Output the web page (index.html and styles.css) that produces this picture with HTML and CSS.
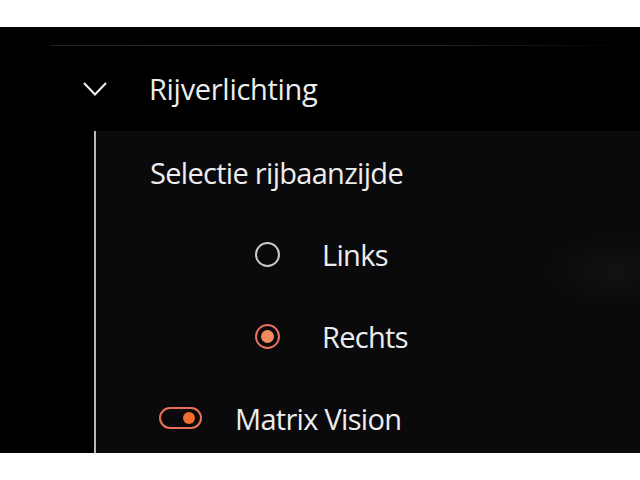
FILE: index.html
```html
<!DOCTYPE html>
<html>
<head>
<meta charset="utf-8">
<link rel="stylesheet" href="styles.css">
</head>
<body>
<div class="screen">
  <div class="divider"></div>
  <div class="header">
    <svg class="chevron" width="24" height="14" viewBox="0 0 24 14"><path d="M1 1 L12 12.5 L23 1" fill="none" stroke="#f2f2f2" stroke-width="2"/></svg>
    <span class="title">Rijverlichting</span>
  </div>
  <div class="panel">
    <div class="row section">Selectie rijbaanzijde</div>
    <div class="row option">
      <span class="radio"></span>
      <span class="label">Links</span>
    </div>
    <div class="row option">
      <span class="radio checked"></span>
      <span class="label">Rechts</span>
    </div>
    <div class="row toggle-row">
      <span class="toggle"><span class="knob"></span></span>
      <span class="label">Matrix Vision</span>
    </div>
  </div>
</div>
</body>
</html>
```
FILE: styles.css
```css
html, body {
  margin: 0;
  padding: 0;
  background: #ffffff;
}
.screen {
  margin-top: 27px;
  height: 426px;
  background: #000;
  overflow: hidden;
  display: flex;
  flex-direction: column;
  font-family: "Open Sans", sans-serif;
  color: #ededed;
}
.divider {
  margin-top: 18px;
  margin-left: 50px;
  width: 560px;
  height: 1px;
  background: linear-gradient(to right, #222, #2c2c2c 40%, #1e1e1e 75%, #050505);
  flex: none;
}
.header {
  flex: none;
  height: 85px;
  display: flex;
  align-items: center;
}
.chevron {
  margin-left: 83px;
}
.title {
  margin-left: 42px;
  font-size: 29px;
  letter-spacing: -0.3px;
}
.panel {
  flex: 1;
  margin-left: 94px;
  border-left: 2px solid #b9b9bd;
  background: radial-gradient(ellipse 70px 35px at 520px 140px, #121214, rgba(10,10,12,0)), #0a0a0c;
  display: flex;
  flex-direction: column;
}
.row {
  flex: none;
  height: 82px;
  display: flex;
  align-items: center;
  font-size: 29px;
  letter-spacing: -0.7px;
}
.section {
  padding-left: 54px;
}
.option {
  padding-left: 159px;
}
.option .label {
  margin-left: 42px;
}
.radio {
  width: 21px;
  height: 21px;
  border: 2px solid #c9c9cc;
  border-radius: 50%;
  box-sizing: content-box;
  position: relative;
}
.radio.checked {
  border-color: #e8705a;
}
.radio.checked::after {
  content: "";
  position: absolute;
  left: 4px;
  top: 4px;
  width: 13px;
  height: 13px;
  border-radius: 50%;
  background: #f38a60;
}
.toggle-row {
  padding-left: 63px;
}
.toggle {
  width: 39px;
  height: 18px;
  border: 2px solid #e8705a;
  border-radius: 11px;
  position: relative;
  box-sizing: content-box;
}
.knob {
  position: absolute;
  right: 5px;
  top: 3px;
  width: 12px;
  height: 12px;
  border-radius: 50%;
  background: #f26e30;
}
.toggle-row .label {
  margin-left: 33px;
}
```
